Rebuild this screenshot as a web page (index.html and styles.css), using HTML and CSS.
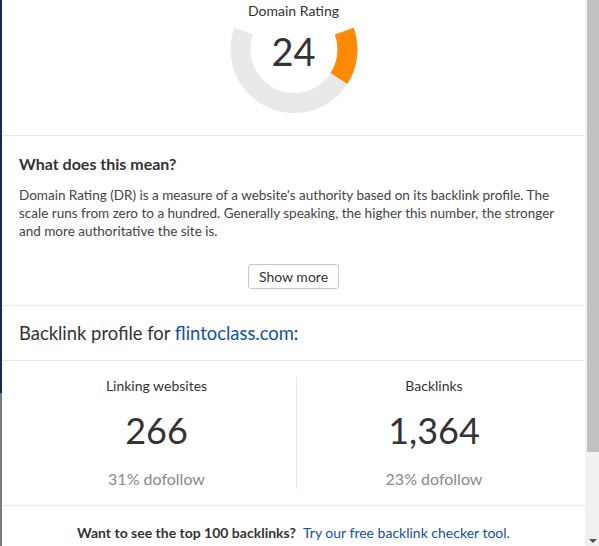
FILE: index.html
```html
<!DOCTYPE html>
<html>
<head>
<meta charset="utf-8">
<link rel="stylesheet" href="styles.css">
</head>
<body>
<div class="strip"></div>
<main class="panel">
  <section class="rating">
    <div class="rating-label">Domain Rating</div>
    <div class="gauge">
      <svg class="gauge-svg" width="128" height="88" viewBox="0 39.5 128 88">
        <path d="M114.27 45.70 A53.5 53.5 0 1 1 13.73 45.70" fill="none" stroke="#e9e9eb" stroke-width="20"/>
        <path d="M114.27 45.70 A53.5 53.5 0 0 1 108.97 92.98" fill="none" stroke="#ff8a00" stroke-width="20"/>
      </svg>
      <div class="gauge-value">24</div>
    </div>
  </section>

  <section class="meaning">
    <h2 class="meaning-title">What does this mean?</h2>
    <p class="meaning-text">Domain Rating (DR) is a measure of a website's authority based on its backlink profile. The scale runs from zero to a hundred. Generally speaking, the higher this number, the stronger and more authoritative the site is.</p>
    <div class="more-row"><button class="more-btn">Show more</button></div>
  </section>

  <section class="profile">
    <h3 class="profile-title">Backlink profile for <a class="link" href="#">flintoclass.com</a>:</h3>
  </section>

  <section class="stats">
    <div class="stat stat-left">
      <div class="stat-label">Linking websites</div>
      <div class="stat-value">266</div>
      <div class="stat-sub">31% dofollow</div>
    </div>
    <div class="stat">
      <div class="stat-label">Backlinks</div>
      <div class="stat-value">1,364</div>
      <div class="stat-sub">23% dofollow</div>
    </div>
  </section>

  <section class="cta">
    <span class="cta-q">Want to see the top 100 backlinks?</span>
    <a class="link cta-link" href="#">Try our free backlink checker tool.</a>
  </section>
</main>
<div class="scrollbar">
  <div class="thumb"></div>
  <div class="arrow"></div>
</div>
</body>
</html>
```

FILE: styles.css
```css
html, body {
  margin: 0;
  padding: 0;
  height: 546px;
  overflow: hidden;
}
body {
  display: flex;
  background: #ffffff;
  font-family: Lato, "Noto Sans", sans-serif;
  color: #333333;
}
.strip {
  width: 2px;
  flex: none;
  background: linear-gradient(to bottom, #0d2c52 0, #0d2c52 393px, #7b7b7b 393px, #7b7b7b 100%);
}
.panel {
  width: 583px;
  flex: none;
  background: #fff;
}
.scrollbar {
  width: 14px;
  flex: none;
  background: #f1f1f1;
  position: relative;
}
.thumb {
  margin-left: 2px;
  height: 452px;
  background: #c1c1c1;
}
.arrow {
  position: absolute;
  left: 4px;
  bottom: 3px;
  width: 0;
  height: 0;
  border-left: 4px solid transparent;
  border-right: 4px solid transparent;
  border-top: 4px solid #505050;
}

/* rating */
.rating {
  padding: 2px 0 22px;
  border-bottom: 1px solid #e8e8e8;
  text-align: center;
}
.rating-label {
  font-size: 14px;
  line-height: 17px;
  color: #333;
}
.gauge {
  position: relative;
  width: 128px;
  height: 88px;
  margin: 6px auto 0;
}
.gauge-svg {
  display: block;
}
.gauge-value {
  position: absolute;
  left: 0;
  right: 0;
  top: 7px;
  font-size: 38px;
  line-height: 38px;
  color: #333;
}

/* meaning */
.meaning {
  padding: 18px 17px 16px;
  border-bottom: 1px solid #e8e8e8;
}
.meaning-title {
  margin: 0;
  font-size: 16px;
  line-height: 20px;
  font-weight: 700;
  color: #333;
}
.meaning-text {
  margin: 12px 0 0;
  font-size: 13.5px;
  line-height: 18px;
  color: #444;
}
.more-row {
  display: flex;
  justify-content: center;
  margin-top: 24px;
}
.more-btn {
  height: 25px;
  padding: 0 10px;
  border: 1px solid #c9c9c9;
  border-radius: 3px;
  background: #fff;
  font-family: Lato, "Noto Sans", sans-serif;
  font-size: 14px;
  color: #333;
}

/* profile */
.profile {
  padding: 16px 17px 16px;
  border-bottom: 1px solid #e8e8e8;
}
.profile-title {
  margin: 0;
  font-size: 18.4px;
  line-height: 22px;
  font-weight: 400;
  color: #333;
}
.link {
  color: #134fa0;
  text-decoration: none;
}

/* stats */
.stats {
  display: grid;
  grid-template-columns: 280px 1fr;
  padding: 16px 14px 16px 15px;
  border-bottom: 1px solid #e8e8e8;
}
.stat {
  text-align: center;
}
.stat-left {
  border-right: 1px solid #e8e8e8;
}
.stat-label {
  font-size: 14px;
  line-height: 18px;
  color: #333;
}
.stat-value {
  margin-top: 15px;
  font-size: 36px;
  line-height: 40px;
  color: #333;
}
.stat-sub {
  margin-top: 19px;
  font-size: 16px;
  line-height: 20px;
  color: #8a8a8a;
}

/* cta */
.cta {
  padding-top: 18px;
  text-align: center;
  font-size: 14px;
  line-height: 18px;
}
.cta-q {
  font-weight: 700;
  color: #333;
  margin-right: 4px;
}
```
